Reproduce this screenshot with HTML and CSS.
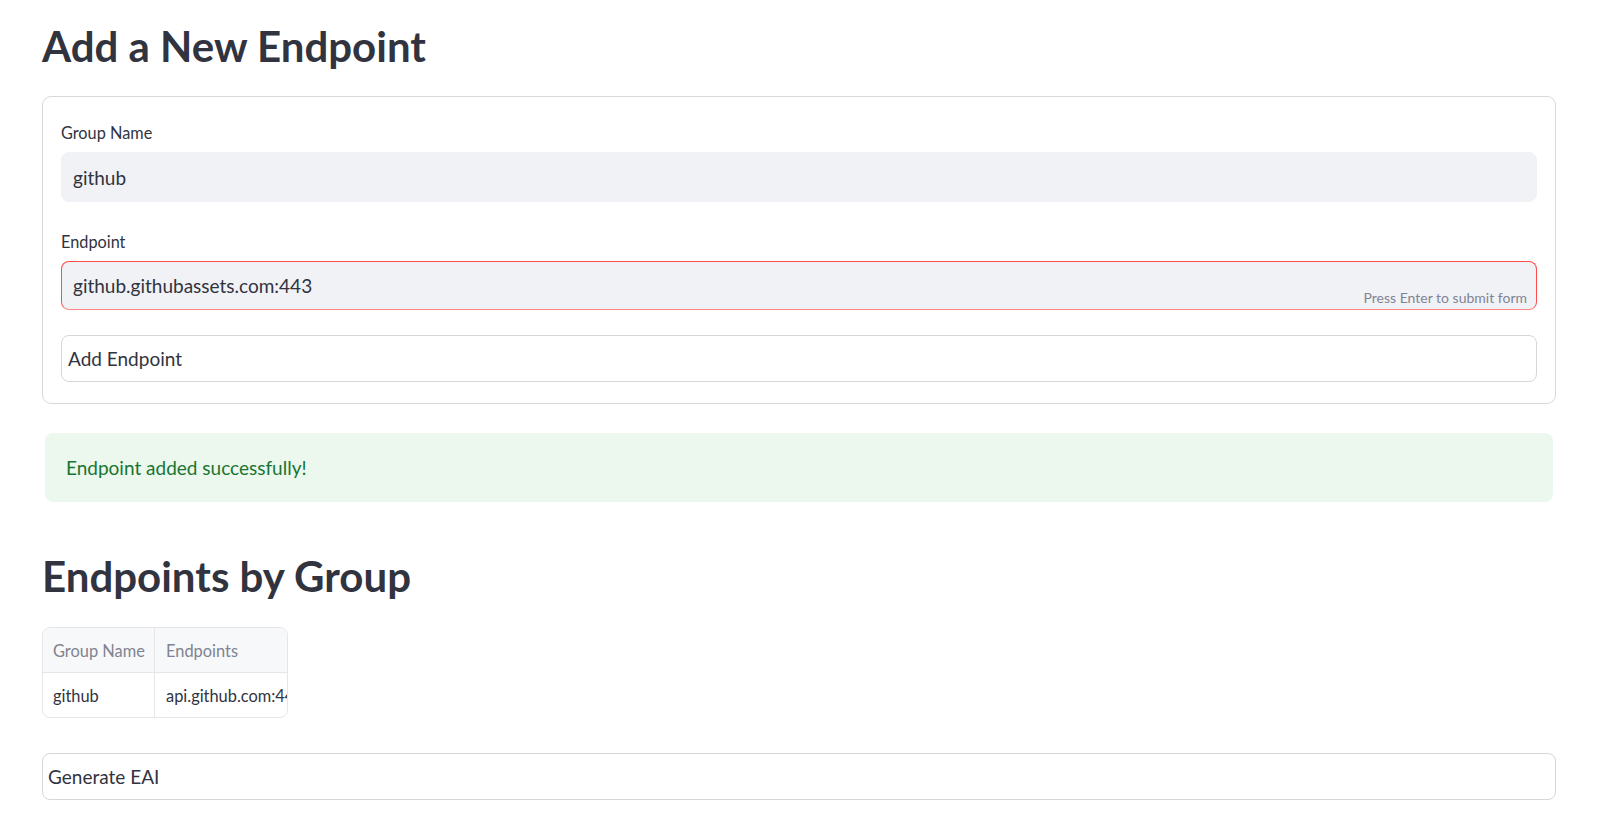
FILE: index.html
```html
<!DOCTYPE html>
<html lang="en">
<head>
<meta charset="utf-8">
<title>Add a New Endpoint</title>
<link rel="stylesheet" href="styles.css">
</head>
<body>
<main class="page">
  <h1 class="page-title">Add a New Endpoint</h1>

  <form class="form-card">
    <div class="field">
      <label class="field-label">Group Name</label>
      <div class="text-input">
        <span class="input-value">github</span>
      </div>
    </div>
    <div class="field">
      <label class="field-label">Endpoint</label>
      <div class="text-input is-focused">
        <span class="input-value">github.githubassets.com:443</span>
        <span class="input-hint">Press Enter to submit form</span>
      </div>
    </div>
    <div class="btn btn-form">Add Endpoint</div>
  </form>

  <div class="alert-success">Endpoint added successfully!</div>

  <h1 class="page-title section-title">Endpoints by Group</h1>

  <div class="data-table">
    <div class="table-row table-head">
      <div class="cell cell-group">Group Name</div>
      <div class="cell cell-endpoints">Endpoints</div>
    </div>
    <div class="table-row">
      <div class="cell cell-group">github</div>
      <div class="cell cell-endpoints">api.github.com:443</div>
    </div>
  </div>

  <div class="btn btn-main">Generate EAI</div>
</main>
</body>
</html>
```

FILE: styles.css
```css
html, body {
  margin: 0;
  padding: 0;
  background: #ffffff;
}

body {
  font-family: "Lato", "Open Sans", sans-serif;
  color: #31333f;
}

.page {
  padding: 0 44px 0 42px;
  display: flex;
  flex-direction: column;
}

.page-title {
  margin: 18px 0 0 0;
  font-size: 42px;
  line-height: 56px;
  font-weight: 700;
  color: #31333f;
}

.section-title {
  margin-top: 46px;
}

.form-card {
  margin: 22px 0 0 0;
  border: 1px solid #d9d9dc;
  border-radius: 9px;
  padding: 25px 18px 21px 18px;
  display: flex;
  flex-direction: column;
}

.field {
  display: flex;
  flex-direction: column;
  margin-bottom: 29px;
}

.field + .field {
  margin-bottom: 25px;
}

.field-label {
  font-size: 16.3px;
  line-height: 22px;
  margin-bottom: 8px;
  color: #31333f;
}

.text-input {
  position: relative;
  height: 50px;
  box-sizing: border-box;
  background: #f0f2f6;
  border: 1px solid #f0f2f6;
  border-radius: 8px;
  display: flex;
  align-items: center;
  padding: 0 11px;
}

.text-input.is-focused {
  height: 49px;
  border-color: #ff4b4b;
  border-bottom-color: #ff8585;
}

.input-value {
  font-size: 19px;
  color: #31333f;
}

.input-hint {
  position: absolute;
  right: 9px;
  bottom: 3px;
  font-size: 14px;
  line-height: 16px;
  color: #808495;
}

.btn {
  box-sizing: border-box;
  border: 1px solid #d6d6d9;
  border-radius: 8px;
  background: #ffffff;
  font-size: 19px;
  color: #31333f;
  display: flex;
  align-items: center;
}

.btn-form {
  height: 47px;
  padding-left: 6px;
}

.alert-success {
  margin: 29px 3px 0 3px;
  background: #ecf7ee;
  border-radius: 8px;
  padding: 22px 21px;
  font-size: 19px;
  line-height: 25px;
  color: #187531;
}

.data-table {
  margin-top: 23px;
  width: 246px;
  box-sizing: border-box;
  border: 1px solid #e6e6ea;
  border-radius: 8px;
  overflow: hidden;
}

.table-row {
  display: flex;
  height: 44px;
}

.table-row + .table-row {
  border-top: 1px solid #e6e6ea;
}

.table-head {
  background: #f7f8fa;
  color: #808390;
}

.cell {
  box-sizing: border-box;
  font-size: 16.4px;
  display: flex;
  align-items: center;
  white-space: nowrap;
  overflow: hidden;
}

.cell-group {
  width: 112px;
  flex: none;
  padding-left: 10px;
  border-right: 1px solid #e6e6ea;
}

.cell-endpoints {
  flex: 1;
  padding-left: 11px;
}

.btn-main {
  margin-top: 35px;
  height: 47px;
  padding-left: 5px;
}
```
